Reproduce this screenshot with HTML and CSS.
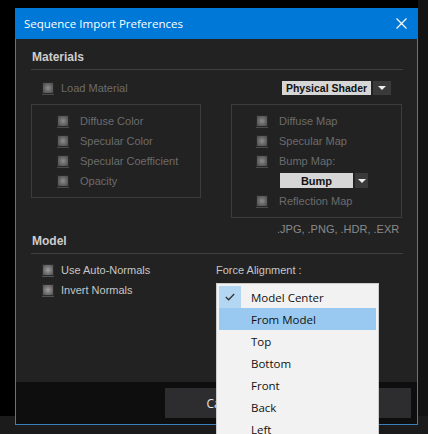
FILE: index.html
```html
<!DOCTYPE html>
<html lang="en">
<head>
  <meta charset="UTF-8" />
  <title>Sequence Import Preferences</title>
  <link rel="stylesheet" href="styles.css">
</head>
<body>

  <div class="dialog">
    <div class="titlebar">
      <span class="title">Sequence Import Preferences</span>
      <button class="close" title="Close">
        <svg width="11" height="11" viewBox="0 0 11 11"><path d="M0.5 0.5 L10.5 10.5 M10.5 0.5 L0.5 10.5" stroke="#fff" stroke-width="1.2" fill="none"/></svg>
      </button>
    </div>

    <div class="dialog-body">
      <!-- Materials -->
      <section class="group group-materials">
        <h2 class="group-title">Materials</h2>
        <div class="load-row">
          <label class="check disabled"><span class="box"></span>Load Material</label>
          <div class="select select-shader">
            <span class="select-value">Physical Shader</span>
            <span class="select-arrow"></span>
          </div>
        </div>
        <div class="map-columns">
          <div class="frame frame-left">
            <label class="check disabled"><span class="box"></span>Diffuse Color</label>
            <label class="check disabled"><span class="box"></span>Specular Color</label>
            <label class="check disabled"><span class="box"></span>Specular Coefficient</label>
            <label class="check disabled"><span class="box"></span>Opacity</label>
          </div>
          <div class="map-side">
            <div class="frame frame-right">
              <label class="check disabled"><span class="box"></span>Diffuse Map</label>
              <label class="check disabled"><span class="box"></span>Specular Map</label>
              <label class="check disabled"><span class="box"></span>Bump Map:</label>
              <div class="select select-bump">
                <span class="select-value">Bump</span>
                <span class="select-arrow"></span>
              </div>
              <label class="check disabled"><span class="box"></span>Reflection Map</label>
            </div>
            <div class="formats">.JPG, .PNG, .HDR, .EXR</div>
          </div>
        </div>
      </section>

      <!-- Model -->
      <section class="group group-model">
        <h2 class="group-title">Model</h2>
        <div class="model-columns">
          <div class="model-checks">
            <label class="check"><span class="box"></span>Use Auto-Normals</label>
            <label class="check"><span class="box"></span>Invert Normals</label>
          </div>
          <div class="align-label">Force Alignment :</div>
        </div>
      </section>
    </div>

    <div class="dialog-footer">
      <button class="btn">Cancel</button>
      <button class="btn">OK</button>
    </div>
  </div>

  <!-- open alignment list -->
  <ul class="menu">
    <li class="menu-item checked">
      <span class="menu-check"><svg width="10" height="8" viewBox="0 0 10 8"><path d="M0.8 4 L3.6 6.8 L9.2 1" stroke="#333" stroke-width="1.3" fill="none"/></svg></span>
      <span class="menu-text">Model Center</span>
    </li>
    <li class="menu-item active"><span class="menu-check"></span><span class="menu-text">From Model</span></li>
    <li class="menu-item"><span class="menu-check"></span><span class="menu-text">Top</span></li>
    <li class="menu-item"><span class="menu-check"></span><span class="menu-text">Bottom</span></li>
    <li class="menu-item"><span class="menu-check"></span><span class="menu-text">Front</span></li>
    <li class="menu-item"><span class="menu-check"></span><span class="menu-text">Back</span></li>
    <li class="menu-item"><span class="menu-check"></span><span class="menu-text">Left</span></li>
  </ul>

</body>
</html>
```

FILE: styles.css
```css
:root {
  --accent: #0078d7;
  --frame-border: #3b7dbd;
  --panel: #222222;
  --footer: #0e0e0e;
  --line: #404040;
  --text: #c6c6c6;
  --text-disabled: #6c6c6c;
  --ui-font: "Liberation Sans", Arial, sans-serif;
  --menu-font: "Open Sans", "Noto Sans", sans-serif;
}
* { box-sizing: border-box; }
body {
  margin: 0; width: 428px; height: 434px; overflow: hidden; position: relative;
  font-family: var(--ui-font); font-size: 11px; color: var(--text);
  background:
    linear-gradient(to bottom, transparent 416px, #1b1b1b 416px),
    linear-gradient(to right, #000 418px, #131313 418px);
}

/* window */
.dialog {
  position: absolute; left: 15px; top: 8px;
  width: 403px; height: 417px;
  display: flex; flex-direction: column;
  border: 1px solid var(--frame-border); border-top: none;
  background: var(--panel);
}
.titlebar {
  height: 31px; margin: 0 -1px; flex: none;
  display: flex; align-items: center; justify-content: space-between;
  background: var(--accent); padding: 0 10px 0 9px;
}
.title { font-family: var(--menu-font); font-size: 11.5px; color: #fff; }
.close {
  background: none; border: none; padding: 0; width: 13px; height: 13px;
  display: flex; align-items: center; justify-content: center;
}

.dialog-body { flex: 1; padding: 0 14px 0 15px; }

.group-title {
  margin: 0; font-size: 12px; font-weight: 700; line-height: 14px; color: #cdcdcd;
  padding: 0 0 5px 1px; border-bottom: 1px solid var(--line);
}
.group-materials .group-title { margin-top: 11px; }

/* checkboxes */
.check { display: flex; align-items: center; gap: 7px; height: 20px; color: var(--text); }
.check.disabled { color: var(--text-disabled); }
.box {
  width: 12px; height: 12px; flex: none;
  border: 1px solid #2b2b2b;
  background: radial-gradient(circle, #a0a0a0 0%, #707070 55%, #4e4e4e 100%);
  box-shadow: 0 1px 0 #525252;
}
.check.disabled .box { opacity: 0.85; }

/* dropdowns */
.select { display: flex; gap: 2px; }
.select-value {
  background: #d6d6d6; color: #111; font-weight: 700;
  display: flex; align-items: center; justify-content: center;
}
.select-arrow {
  background: #3a3a3a; display: flex; align-items: center; justify-content: center;
}
.select-arrow::after {
  content: ""; border-left: 4px solid transparent; border-right: 4px solid transparent;
  border-top: 4px solid #eee;
}
.select-shader { height: 14px; }
.select-shader .select-value { width: 89px; font-size: 10.5px; }
.select-shader .select-arrow { width: 18px; }
.select-bump { height: 15px; width: 88px; margin: 2px 0 3px 24px; }
.select-bump .select-value { width: 73px; }
.select-bump .select-arrow { flex: 1; }

.load-row {
  display: flex; align-items: center; justify-content: space-between;
  height: 20px; margin-top: 8px; padding: 0 12px 0 11px;
}

.map-columns {
  display: grid; grid-template-columns: 170px 171px; column-gap: 30px;
  align-items: start; margin-top: 6px;
}
.frame { border: 1px solid #3c3c3c; padding: 6px 0 6px 25px; }
.frame .check { gap: 11px; }
.frame-right { padding-left: 24px; }
.formats {
  margin-top: 6px; padding-left: 46px; line-height: 10px; color: #8a8a8a;
}

.model-columns {
  display: grid; grid-template-columns: 185px 1fr; margin-top: 6px;
}
.model-checks { padding-left: 11px; }
.align-label { line-height: 20px; color: var(--text); }

/* footer buttons */
.dialog-footer {
  height: 42px; flex: none; background: var(--footer);
  display: flex; justify-content: flex-end; gap: 6px; padding: 6px 6px 0 0;
}
.btn {
  width: 120px; height: 30px; border: none; background: #2d2d30;
  color: #e6e6e6; font-family: var(--menu-font); font-size: 12px;
}

/* popup list */
.menu {
  position: absolute; left: 216px; top: 283px; width: 163px;
  margin: 0; padding: 2px; list-style: none;
  background: #f2f2f2; border: 1px solid #cccccc;
  font-family: var(--menu-font); font-size: 11.5px; color: #111;
}
.menu-item { display: flex; align-items: center; height: 22px; }
.menu-check {
  width: 22px; height: 22px; flex: none;
  display: flex; align-items: center; justify-content: center;
}
.menu-item.checked .menu-check { background: #b3d6f3; }
.menu-item.active { background: #99c9f0; }
.menu-text { margin-left: 10px; }
```
